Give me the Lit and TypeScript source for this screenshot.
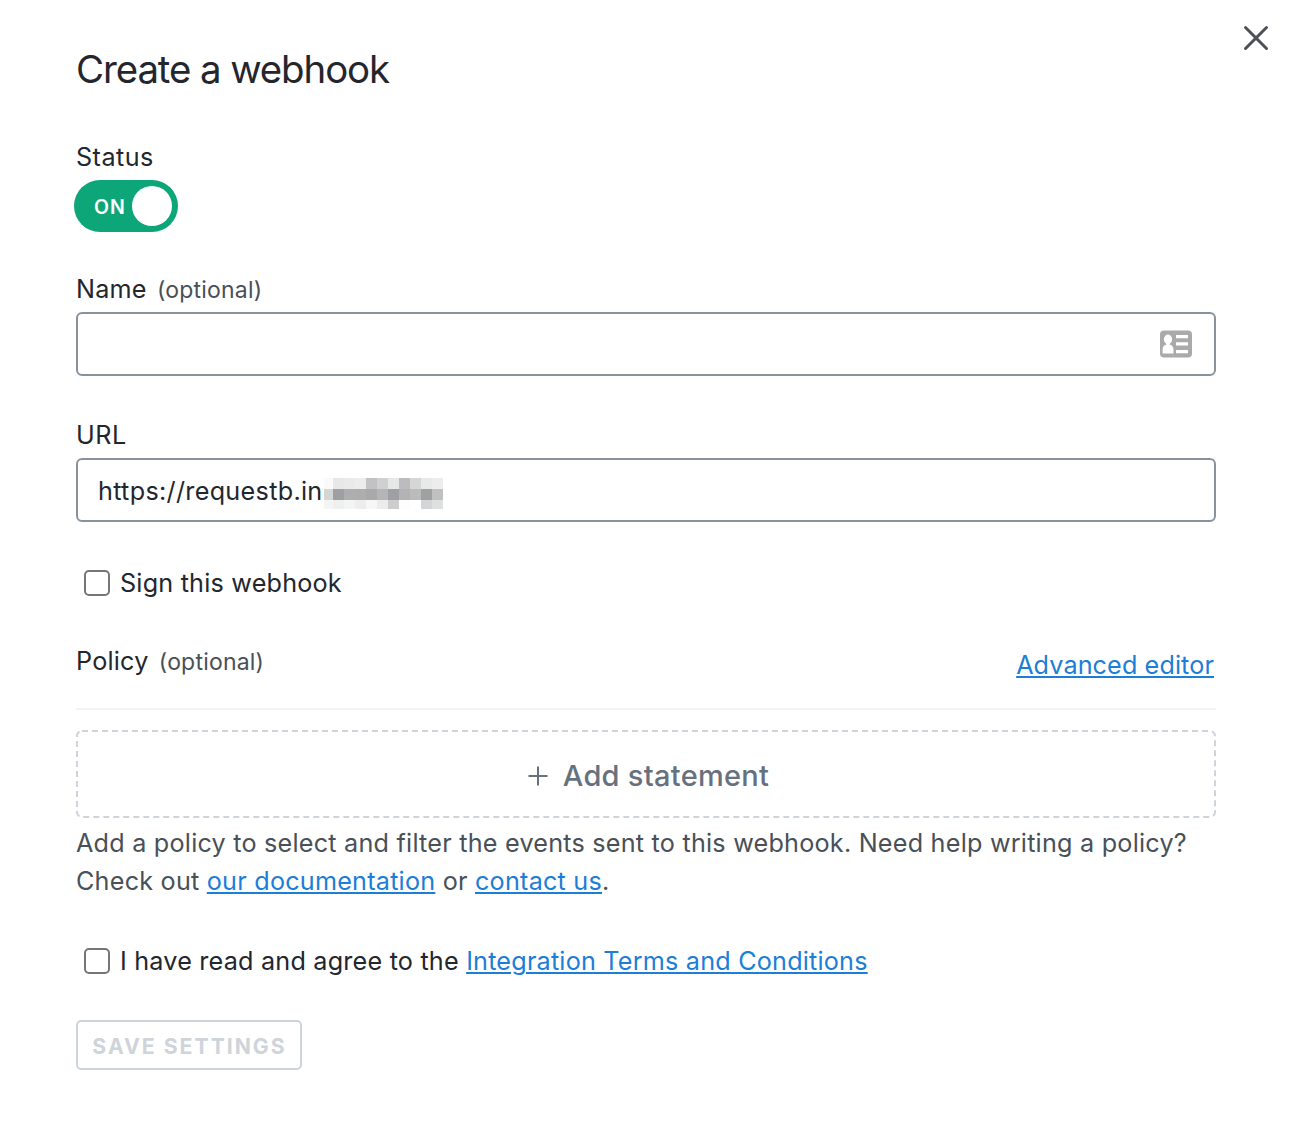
import { LitElement, html, css, svg } from "lit";
import { customElement } from "lit/decorators.js";

const REDACTED = [
  ["#fafafa", "#e8e8e8", "#eaeaeb", "#ececec", "#c2c2c4", "#d0d0d2", "#e6e8e8", "#bcbcbe", "#d6d6d7", "#e8eaea", "#ededed"],
  ["#d5d5d6", "#9e9ea3", "#aeaeaf", "#adadaf", "#a9a9ab", "#b5b5b6", "#a0a0a4", "#b3b3b5", "#babbbb", "#a0a0a2", "#bfc1c1"],
  ["#f4f4f4", "#eeefef", "#f3f4f4", "#ededed", "#f7f7f8", "#ececec", "#cdcdcf", "#fdfdfd", "#ffffff", "#d4d5d6", "#dde0de"],
];

@customElement("app-root")
export class AppRoot extends LitElement {
  static styles = css`
    :host {
      display: block;
      box-sizing: border-box;
      width: 1294px;
      height: 1132px;
      overflow: hidden;
      background: #fff;
      color: #23262d;
      font-family: Inter, "Liberation Sans", sans-serif;
      font-size: 25.2px;
      line-height: 38px;
      letter-spacing: 0.2px;
      white-space: nowrap;
    }
    * { box-sizing: border-box; }
    .dialog { display: flex; align-items: flex-start; padding-left: 76px; }
    .form { display: flex; flex-direction: column; width: 1140px; padding-top: 44px; }
    .close { margin: 25px 0 0 27px; width: 26px; height: 26px; }
    svg { display: block; }
    .title { margin: 0; padding-top: 1px; height: 48px; font-size: 38.4px; line-height: 48px; font-weight: 400; letter-spacing: -1.08px; }
    .field { display: flex; flex-direction: column; gap: 4px; }
    .label { height: 38px; }
    .status { margin-top: 46px; }
    .status .label { letter-spacing: 0.45px; }
    .name { margin-top: 38px; }
    .url { margin-top: 40px; }
    .url .label { letter-spacing: 0.5px; }
    .toggle {
      display: flex; align-items: center; justify-content: space-between;
      width: 104px; height: 52px; margin-left: -2px; padding: 0 6px 0 20px;
      border-radius: 26px; background: #0ca678; color: #fff;
      font-size: 19.5px; font-weight: 600; letter-spacing: 1px;
    }
    .toggle .text { padding-top: 2px; }
    .knob { width: 40px; height: 40px; border-radius: 50%; background: #fff; }
    .optional { margin-left: 3px; font-size: 23px; color: #495057; }
    .input {
      display: flex; align-items: center; height: 64px; padding: 0 22px 0 20px;
      border: 2px solid #87929d; border-radius: 6px;
    }
    .name .input { justify-content: flex-end; }
    .value { padding-top: 2px; letter-spacing: 0.3px; }
    .mosaic {
      display: grid; margin: 6px 0 0 1px;
      grid-template-columns: 9px repeat(10, 11px);
      grid-template-rows: 11px 11px 9px;
    }
    .check { display: flex; align-items: center; gap: 10px; padding-left: 8px; }
    .box { width: 26px; height: 26px; border: 2px solid #767676; border-radius: 5px; }
    .sign { margin-top: 42px; }
    .policy { display: flex; justify-content: space-between; height: 68px; margin-top: 40px; padding-right: 2px; border-bottom: 2px solid #f1f3f5; }
    .policy .link { margin-top: 4px; height: 38px; letter-spacing: 0.1px; }
    .link { color: #1c7ed6; text-decoration: underline; text-decoration-thickness: 2px; text-underline-offset: 2px; }
    .add {
      display: flex; align-items: center; justify-content: center; gap: 15px;
      height: 88px; margin-top: 20px; padding: 3px 0 0 5px;
      color: #66717d; font-size: 29px; font-weight: 500; letter-spacing: 0.28px;
    }
    .plus { margin-top: 1px; }
    .dashed { display: grid; }
    .dashed > * { grid-area: 1 / 1; }
    .dashed .frame { margin-top: 20px; }
    .help { color: #495057; margin-top: 6px; letter-spacing: 0.22px; }
    .terms { margin-top: 42px; }
    .save {
      display: flex; align-items: center; justify-content: center;
      width: 226px; height: 50px; margin-top: 40px; padding: 1px 0 0 1px;
      border: 2px solid #ced4da; border-radius: 5px; color: #ced4da;
      font-size: 21.2px; font-weight: 700; letter-spacing: 2px;
    }
  `;

  private mosaic() {
    return html`<span class="mosaic">${REDACTED.flat().map((c) => html`<i style="background:${c}"></i>`)}</span>`;
  }

  private card() {
    return svg`<svg width="32" height="28" viewBox="0 0 32 28">
      <rect y=".5" width="32" height="27" rx="4" fill="#aaa"/>
      <ellipse cx="8" cy="9.4" rx="4.1" ry="4.8" fill="#fff"/>
      <path d="M6.3 12h3.4v2.6c2.4.7 3.8 2.4 3.8 5.2V23.5H2.6V19.8c0-2.800 1.400-4.500 3.700-5.200z" fill="#fff"/>
      <path d="M16 5h12v3.2H16zM16 12.3h12v3.2H16zM16 20h12v3.2H16z" fill="#fff"/>
    </svg>`;
  }

  render() {
    return html`
      <div class="dialog">
        <div class="form">
          <h1 class="title">Create a webhook</h1>
          <div class="field status">
            <div class="label">Status</div>
            <div class="toggle"><span class="text">ON</span><span class="knob"></span></div>
          </div>
          <div class="field name">
            <div class="label">Name <span class="optional">(optional)</span></div>
            <div class="input">${this.card()}</div>
          </div>
          <div class="field url">
            <div class="label">URL</div>
            <div class="input"><span class="value">https://requestb.in</span>${this.mosaic()}</div>
          </div>
          <div class="check sign"><span class="box"></span><span>Sign this webhook</span></div>
          <div class="policy">
            <div class="label">Policy <span class="optional">(optional)</span></div>
            <a class="link">Advanced editor</a>
          </div>
          <div class="dashed">
            <svg class="frame" width="1140" height="88" viewBox="0 0 1140 88" fill="none">
              <rect x="1" y="1" width="1138" height="86" rx="5" stroke="#ced4da" stroke-width="2" stroke-dasharray="6 4"/>
            </svg>
            <div class="add">
              <svg class="plus" width="20" height="20" viewBox="0 0 20 20" fill="none" stroke="#66717d" stroke-width="2"><path d="M0.5 10h19M10 0.5v19"/></svg>
              <span>Add statement</span>
            </div>
          </div>
          <div class="help">Add a policy to select and filter the events sent to this webhook. Need help writing a policy?<br />Check out <a class="link">our documentation</a> or <a class="link">contact us</a>.</div>
          <div class="check terms"><span class="box"></span><span>I have read and agree to the <a class="link">Integration Terms and Conditions</a></span></div>
          <div class="save">SAVE SETTINGS</div>
        </div>
        <svg class="close" viewBox="0 0 26 26" fill="none" stroke="#495057" stroke-width="3" stroke-linecap="round"><path d="M2.5 2.5l21 21M23.5 2.5l-21 21"/></svg>
      </div>
    `;
  }
}
